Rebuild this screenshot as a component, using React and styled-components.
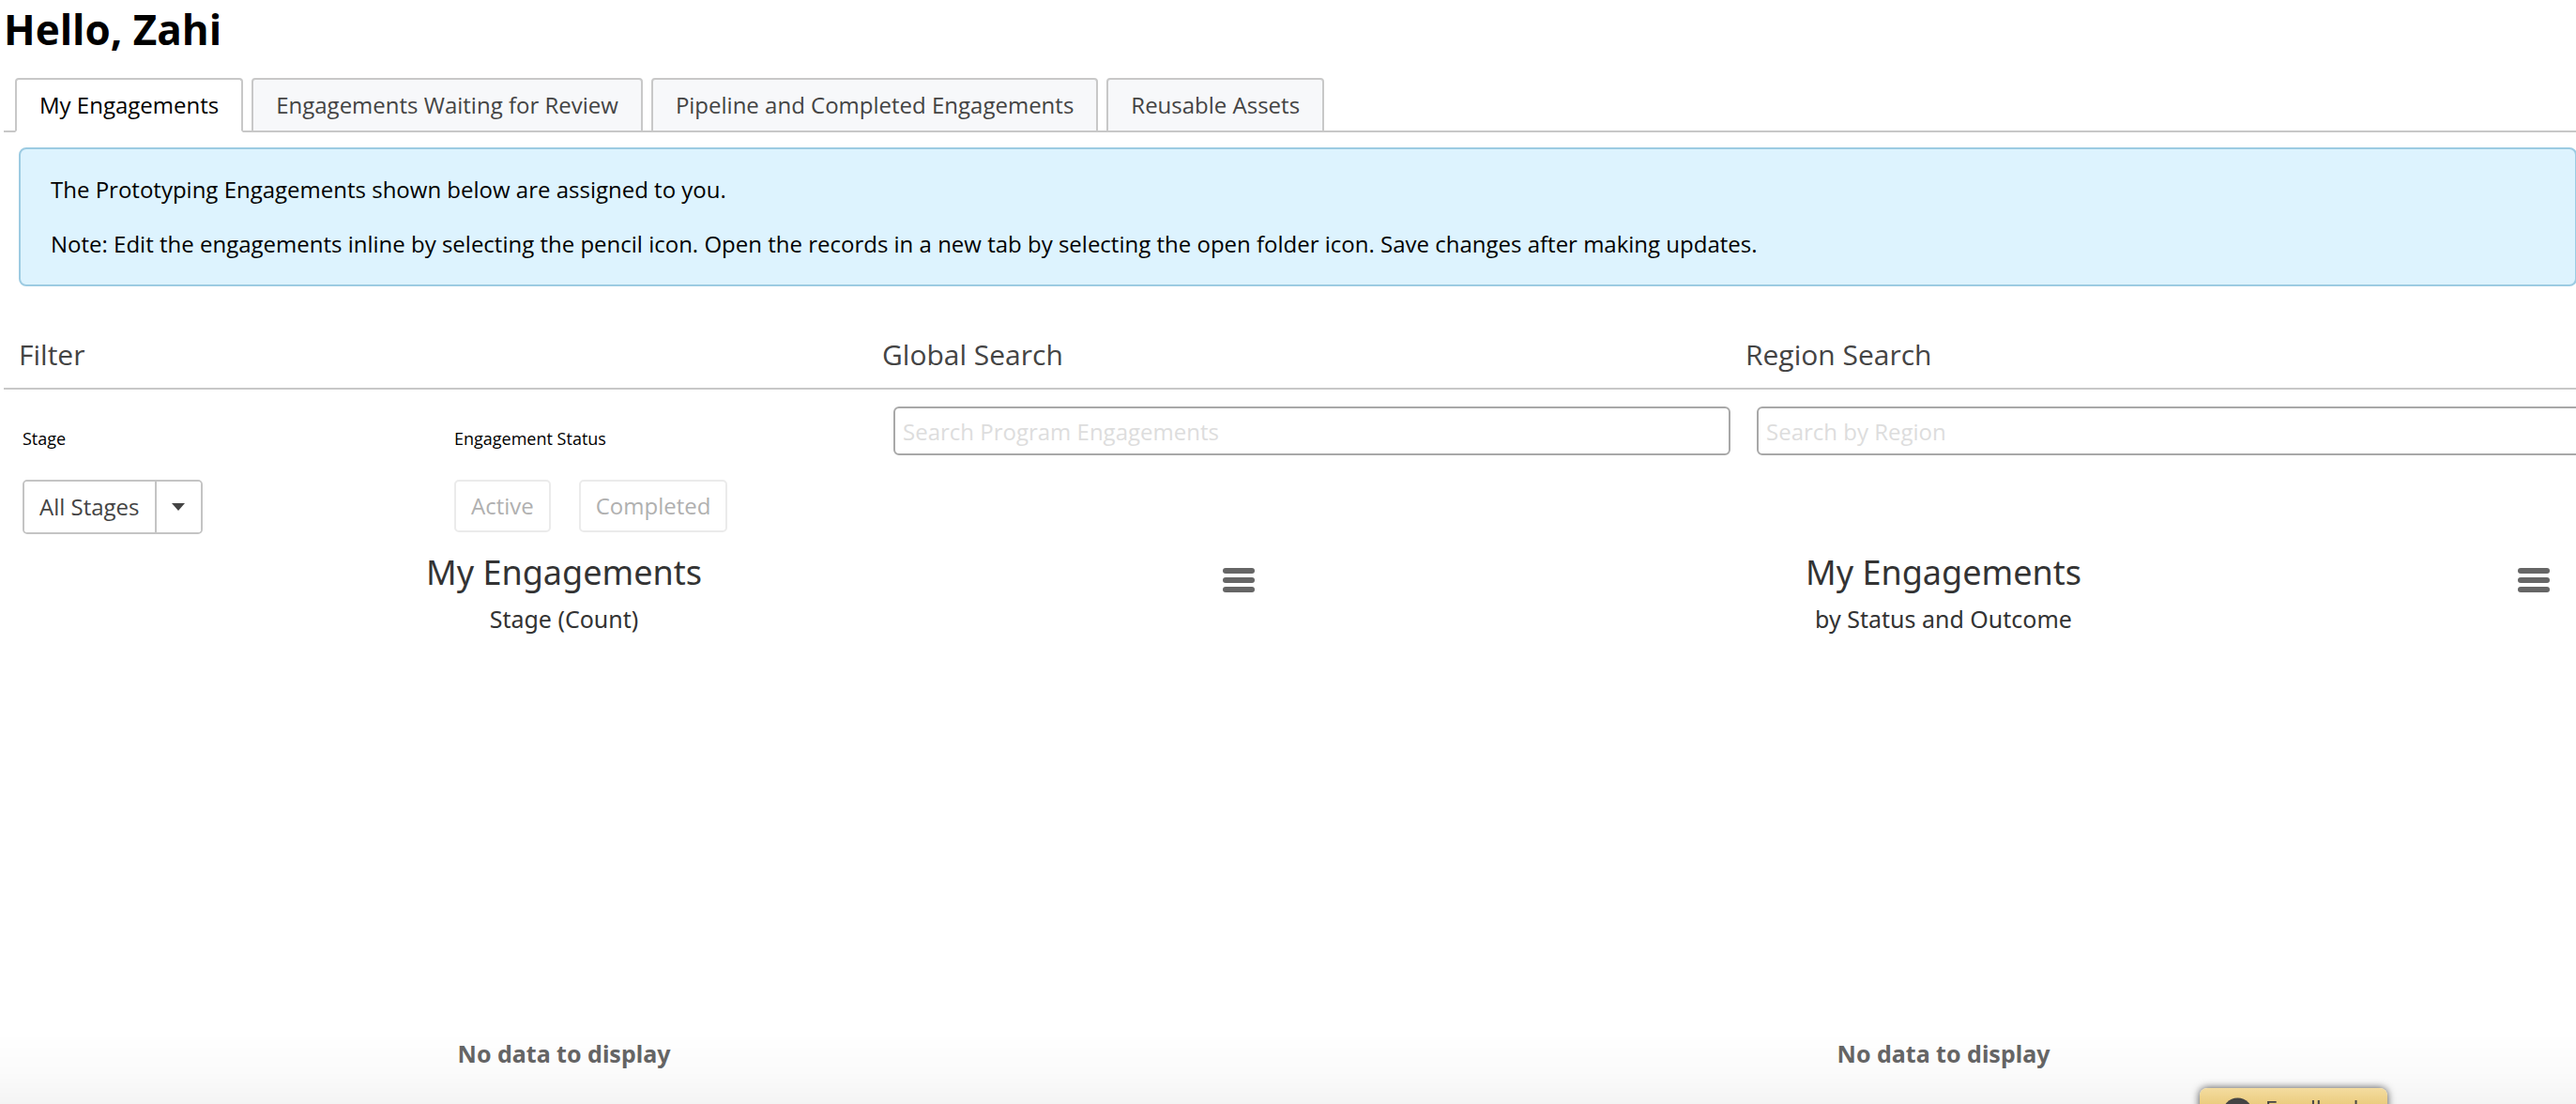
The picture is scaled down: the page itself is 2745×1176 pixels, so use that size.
import React, { useState } from "react";
import styled, { createGlobalStyle } from "styled-components";

const GlobalStyle = createGlobalStyle`
  *, *::before, *::after { box-sizing: border-box; }
  body {
    margin: 0;
    background: #fff;
    color: #000;
    font-family: "Open Sans", "Noto Sans", sans-serif;
    font-size: 24px;
    line-height: 32px;
    overflow: hidden;
  }
  button, input { font: inherit; color: inherit; }
`;

const Viewport = styled.div`
  height: 100vh;
  overflow: hidden;
`;

/* The dashboard is slightly wider than its frame, so its right gutter is clipped. */
const Page = styled.main`
  width: calc(100% + 19px);
  padding-left: 4px;
`;

const Greeting = styled.h1`
  margin: 0;
  font-size: 44px;
  line-height: 62px;
  font-weight: 700;
`;

const TabBar = styled.nav`
  display: flex;
  gap: 9px;
  margin-top: 21px;
  padding-left: 12px;
  border-bottom: 2px solid #c8c8c8;
`;

const Tab = styled.button`
  height: 58px;
  margin-bottom: -2px;
  padding: 0 24px;
  border: 2px solid #c8c8c8;
  border-bottom-color: ${(p) => (p.$active ? "#fff" : "#c8c8c8")};
  border-radius: 4px 4px 0 0;
  background: ${(p) => (p.$active ? "#fff" : "#f7f8fa")};
  color: ${(p) => (p.$active ? "#000" : "#444")};
  white-space: nowrap;
`;

const Notice = styled.section`
  margin: 16px 18px 0 16px;
  padding: 14px 32px;
  border: 2px solid #9ccbe2;
  border-radius: 8px;
  background: #ddf3fe;
`;

const NoticeLine = styled.p`
  margin: 0;
  line-height: 58px;
`;

const Filters = styled.section`
  display: grid;
  grid-template-columns: repeat(3, 1fr);
  margin-top: 48px;
`;

const FilterTitle = styled.h2`
  display: block;
  margin: 0;
  padding: 0 16px 10px;
  border-bottom: 2px solid #c8c8c8;
  color: #444;
  font-size: 30px;
  line-height: 50px;
  font-weight: 400;
`;

const FilterFields = styled.div`
  display: grid;
  grid-template-columns: 1fr 1fr;
`;

const Field = styled.div`
  padding: 40px 20px 0;
`;

const FieldLabel = styled.div`
  font-size: 18px;
  line-height: 24px;
`;

const ButtonRow = styled.div`
  display: flex;
  gap: 30px;
  margin-top: 32px;
`;

const SplitButton = styled.div`
  display: flex;
  height: 58px;
  border: 2px solid #c4c4c4;
  border-radius: 5px;
  overflow: hidden;
`;

const SplitPart = styled.button`
  display: flex;
  align-items: center;
  justify-content: center;
  min-width: 49px;
  padding: 0 16px;
  border: 0;
  border-left: ${(p) => (p.$divided ? "2px solid #c4c4c4" : "0")};
  background: #fff;
  color: #444;
`;

const StatusButton = styled.button`
  height: 56px;
  padding: 0 16px;
  border: 2px solid #ebebeb;
  border-radius: 5px;
  background: #fff;
  color: #b0b0b0;
`;

const SearchBox = styled.div`
  padding: 18px 0 0 28px;
`;

const SearchInput = styled.input`
  display: block;
  width: 100%;
  height: 52px;
  padding: 0 8px;
  border: 2px solid #a8a8a8;
  border-radius: 6px;
  background: #fff;
  &::placeholder { color: #ddd; opacity: 1; }
`;

const Charts = styled.section`
  display: grid;
  grid-template-columns: repeat(2, 1fr);
  font-family: "Noto Sans", "Open Sans", sans-serif;
  font-size: 25px;
`;

const Chart = styled.article`
  position: relative;
  padding: 16px ${(p) => p.$legendSpace}px 0 0;
  text-align: center;
`;

const ChartTitle = styled.h3`
  margin: 0;
  color: #333;
  font-size: 36px;
  line-height: 50px;
  font-weight: 400;
`;

const ChartSubtitle = styled.p`
  margin: 8px 0 0;
  color: #333;
  line-height: 32px;
`;

const PlotArea = styled.div`
  display: flex;
  align-items: center;
  justify-content: center;
  height: 894px;
  color: #666;
  font-weight: 700;
`;

const ChartMenu = styled.button`
  position: absolute;
  top: 30px;
  right: 41px;
  display: flex;
  padding: 6px;
  border: 0;
  background: none;
`;

const BottomFade = styled.div`
  position: fixed;
  inset: auto 0 0;
  height: 76px;
  background: linear-gradient(rgba(0, 0, 0, 0), rgba(0, 0, 0, 0.015) 55%, rgba(0, 0, 0, 0.045));
  pointer-events: none;
`;

const Feedback = styled.button`
  position: fixed;
  right: 201px;
  bottom: -37px;
  display: flex;
  align-items: flex-start;
  gap: 13px;
  width: 200px;
  height: 54px;
  padding: 9px 24px;
  border: 0;
  border-radius: 8px;
  background: linear-gradient(#f4dca0, #e6c36c 50%, #e0b655);
  box-shadow: 0 0 8px rgba(0, 0, 0, 0.7);
  color: #444;
  line-height: 26px;
`;

const tabs = [
  "My Engagements",
  "Engagements Waiting for Review",
  "Pipeline and Completed Engagements",
  "Reusable Assets",
];

const charts = [
  { subtitle: "Stage (Count)", legendSpace: 186 },
  { subtitle: "by Status and Outcome", legendSpace: 6 },
];

function MenuIcon() {
  return (
    <svg width="34" height="26" viewBox="0 0 34 26" fill="#666" aria-hidden="true">
      <rect width="34" height="6" rx="3" />
      <rect y="10" width="34" height="6" rx="3" />
      <rect y="20" width="34" height="6" rx="3" />
    </svg>
  );
}

function CaretIcon() {
  return (
    <svg width="14" height="8" viewBox="0 0 14 8" fill="#444" aria-hidden="true">
      <path d="M0 0h14L7 8z" />
    </svg>
  );
}

function BadgeIcon() {
  return (
    <svg width="36" height="36" viewBox="0 0 36 36" aria-hidden="true">
      <circle cx="18" cy="18" r="18" fill="#444" />
      <path
        d="M13 15a5 5 0 1 1 7 4.500c-1.500.8-2 1.500-2 3.500M18 27v2"
        fill="none"
        stroke="#f0d38c"
        strokeWidth="3"
      />
    </svg>
  );
}

export default function App() {
  const [active, setActive] = useState(tabs[0]);
  return (
    <Viewport>
      <GlobalStyle />
      <Page>
        <Greeting>Hello, Zahi</Greeting>
        <TabBar>
          {tabs.map((tab) => (
            <Tab key={tab} $active={tab === active} onClick={() => setActive(tab)}>
              {tab}
            </Tab>
          ))}
        </TabBar>
        <Notice>
          <NoticeLine>The Prototyping Engagements shown below are assigned to you.</NoticeLine>
          <NoticeLine>
            Note: Edit the engagements inline by selecting the pencil icon. Open the records in a
            new tab by selecting the open folder icon. Save changes after making updates.
          </NoticeLine>
        </Notice>
        <Filters>
          <div>
            <FilterTitle>Filter</FilterTitle>
            <FilterFields>
              <Field>
                <FieldLabel id="stage-label">Stage</FieldLabel>
                <ButtonRow role="group" aria-labelledby="stage-label">
                  <SplitButton>
                    <SplitPart>All Stages</SplitPart>
                    <SplitPart $divided aria-label="Choose stage">
                      <CaretIcon />
                    </SplitPart>
                  </SplitButton>
                </ButtonRow>
              </Field>
              <Field>
                <FieldLabel id="status-label">Engagement Status</FieldLabel>
                <ButtonRow role="group" aria-labelledby="status-label">
                  <StatusButton>Active</StatusButton>
                  <StatusButton>Completed</StatusButton>
                </ButtonRow>
              </Field>
            </FilterFields>
          </div>
          <div>
            <FilterTitle as="label" htmlFor="global-search">
              Global Search
            </FilterTitle>
            <SearchBox>
              <SearchInput id="global-search" placeholder="Search Program Engagements" />
            </SearchBox>
          </div>
          <div>
            <FilterTitle as="label" htmlFor="region-search">
              Region Search
            </FilterTitle>
            <SearchBox>
              <SearchInput id="region-search" placeholder="Search by Region" />
            </SearchBox>
          </div>
        </Filters>
        <Charts>
          {charts.map((chart) => (
            <Chart key={chart.subtitle} $legendSpace={chart.legendSpace}>
              <ChartTitle>My Engagements</ChartTitle>
              <ChartSubtitle>{chart.subtitle}</ChartSubtitle>
              <PlotArea>No data to display</PlotArea>
              <ChartMenu aria-label="Chart menu">
                <MenuIcon />
              </ChartMenu>
            </Chart>
          ))}
        </Charts>
      </Page>
      <BottomFade />
      <Feedback>
        <BadgeIcon />
        <span>Feedback</span>
      </Feedback>
    </Viewport>
  );
}
